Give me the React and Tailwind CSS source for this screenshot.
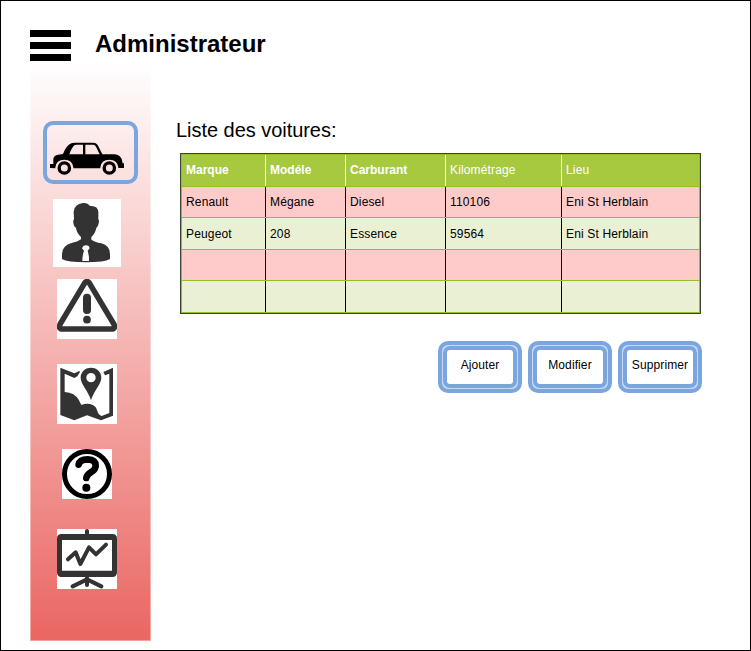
const headers = ["Marque", "Modéle", "Carburant", "Kilométrage", "Lieu"];

const rows = [
  { height: "h-[31px]", color: "bg-[#ffcaca]", cells: ["Renault", "Mégane", "Diesel", "110106", "Eni St Herblain"] },
  { height: "h-[32px]", color: "bg-[#e9f0d3]", cells: ["Peugeot", "208", "Essence", "59564", "Eni St Herblain"] },
  { height: "h-[31px]", color: "bg-[#ffcaca]", cells: ["", "", "", "", ""] },
  { height: "h-[32px]", color: "bg-[#e9f0d3]", cells: ["", "", "", "", ""] },
];

const columns = "grid grid-cols-[84px_80px_100px_116px_137px]";

function CarIcon() {
  return (
    <svg width="75" height="34" viewBox="60 96 225 102">
      <path d="M60 162H70V146Q72 136 84 134L99 132Q109 106 124 100Q127 98 134 98H190Q198 98 203 105L217 133H254Q270 135 275 147L278 160H282V174H262L220 175H78L60 174Z" />
      <path d="M118 133Q125 113 133 106Q135 104 139 104H159V133ZM166 104H190Q195 104 198 110L209 133H166Z" fill="#fce5e4" />
      <path d="M76 172q2-22 27-23q25 1 27 23v24H76zM211 172q2-22 27-23q25 1 27 23v24h-54z" fill="#fbe0df" />
      <circle cx="103" cy="174" r="15.500" fill="#fbe0df" stroke="#000" strokeWidth="10" />
      <circle cx="238" cy="174" r="15.500" fill="#fbe0df" stroke="#000" strokeWidth="10" />
    </svg>
  );
}

function PersonIcon() {
  return (
    <svg width="68" height="68" viewBox="69 27 204 204" fill="#333" className="bg-white">
      <path d="M131 65q2-23 28-26q14-1 21 9q24-2 25 18v22q3 2 1 12q-2 11-7 14q-4 18-15 27v8q9 7 30 11q26 7 26 32v15q-16 10-72 10t-72-10v-15q0-23 26-32q22-5 31-12v-7q-12-10-15-27q-7-4-8-15q-1-9 2-11z" />
      <path d="M160 168q8-5 16 0l3 7-6 7q5 17 4 31h-20q0-17 5-31l-6-7z" fill="#fff" />
    </svg>
  );
}

function WarningIcon() {
  return (
    <svg width="60" height="60" viewBox="81 27 180 180" fill="#333" className="bg-white">
      <path d="M164 39q7-9 14 0l74 124q6 14-8 14H98q-14 0-8-14z" fill="none" stroke="#333" strokeWidth="16.500" />
      <path d="M159 83a12 12 0 0 1 24 0v37a12 12 0 0 1-24 0z" />
      <circle cx="171" cy="149" r="11.500" />
    </svg>
  );
}

function MapIcon() {
  return (
    <svg width="60" height="60" viewBox="81 27 180 180" fill="#333" className="bg-white">
      <path d="M91 38L133 55L148 48L150 51L142 64L133 69L104 56V111Q134 112 147 136Q151 147 155 150Q164 145 180 147Q199 151 202 168Q205 180 215 183L238 174V56L225 61L220 51L249 38V182L213 196L171 181L133 196L91 180Z" />
      <path fillRule="evenodd" d="M183 38c19 0 31 14 31 30c0 19-21 37-31 67c-10-30-31-48-31-67c0-16 12-30 31-30zm0 16a14 14 0 1 0 0 28a14 14 0 1 0 0-28z" />
    </svg>
  );
}

function HelpIcon() {
  return (
    <svg width="50" height="50" viewBox="96 27 150 150" className="bg-white">
      <circle cx="171" cy="102" r="67.500" fill="none" stroke="#000" strokeWidth="15" />
      <path d="M146 74q3-16 27-16q24 1 24 19q0 11-13 19q-13 7-15 18" fill="none" stroke="#000" strokeWidth="20" strokeLinecap="round" />
      <circle cx="169" cy="143" r="12" />
    </svg>
  );
}

function BoardIcon() {
  return (
    <svg width="60" height="60" viewBox="81 27 180 180" fill="none" stroke="#333" strokeLinecap="round" className="bg-white">
      <path d="M171 33v12M171 174v21" strokeWidth="12" />
      <path fillRule="evenodd" stroke="none" fill="#333" d="M95 42h152q14 0 14 14v101q0 14-14 14H95q-14 0-14-14V56q0-14 14-14zm1 18v92h150V60z" />
      <path d="M171 178l-43 21M171 178l43 21" strokeWidth="12" />
      <path d="M114 118l23-21 14 35 26-50 21 21 30-29" strokeWidth="12" strokeLinejoin="round" />
    </svg>
  );
}

function ActionButton({ children }) {
  return (
    <button className="h-[52px] w-[84px] rounded-[10px] border-4 border-[#7ba5df] bg-[#c8daf4] p-px">
      <span className="flex h-full items-center justify-center rounded-[7px] border-4 border-[#7ba5df] bg-white pb-1 text-[12px] tracking-[0.1px] whitespace-nowrap">
        <span>{children}</span>
      </span>
    </button>
  );
}

export default function App() {
  return (
    <div className="h-[651px] w-[751px] overflow-hidden border border-black bg-white pl-[29px] pt-[29px] font-['Liberation_Sans',Arial,sans-serif] text-black">
      <header className="flex h-[31px] items-center gap-6">
        <div className="flex h-[31px] w-[41px] flex-col justify-between">
          <div className="h-[7px] bg-black" />
          <div className="h-[7px] bg-black" />
          <div className="h-[7px] bg-black" />
        </div>
        <h1 className="pb-1 text-[24px] leading-7 font-bold">Administrateur</h1>
      </header>
      <div className="flex">
        <nav className="flex h-[580px] w-[121px] flex-col items-center border-x border-b border-white/40 bg-linear-to-b/srgb from-white to-[#ea6662] bg-origin-border">
          <div className="mt-[60px] flex h-[63px] w-[95px] justify-center rounded-[10px] border-4 border-[#7ba5df] pt-[17px] pr-1.5">
            <CarIcon />
          </div>
          <div className="mt-[15px] pr-[7px]"><PersonIcon /></div>
          <div className="mt-3 pr-[7px]"><WarningIcon /></div>
          <div className="mt-[25px] pr-[7px]"><MapIcon /></div>
          <div className="mt-[25px] pr-[7px]"><HelpIcon /></div>
          <div className="mt-[30px] pr-[7px]"><BoardIcon /></div>
        </nav>
        <main className="pt-[57px] pl-[25px]">
          <h2 className="text-[20px] leading-6 tracking-[-0.04px]">Liste des voitures:</h2>
          <div className="mt-[11px] ml-1 w-[521px] border border-[#3b4430] text-[12px] tracking-[0.15px]">
            <div className="border-x border-t border-[#93be24]">
              <div className={`${columns} h-[32px] border-b border-[#93be24] bg-[#a6c93f] text-white`}>
                {headers.map((label, i) => (
                  <div key={label} className={`flex items-center pb-0.5 pl-1 ${i < 4 ? "border-r border-white" : ""} ${i < 3 ? "font-bold tracking-normal" : ""}`}>
                    {label}
                  </div>
                ))}
              </div>
              {rows.map((row, r) => (
                <div key={r} className={`${columns} ${row.height} ${row.color} border-b border-[#93be24]`}>
                  {row.cells.map((cell, i) => (
                    <div key={i} className={`flex items-center pl-1 ${i < 4 ? "border-r border-black" : ""}`}>
                      {cell}
                    </div>
                  ))}
                </div>
              ))}
            </div>
          </div>
          <div className="mt-[27px] ml-[262px] flex gap-1.5">
            <ActionButton>Ajouter</ActionButton>
            <ActionButton>Modifier</ActionButton>
            <ActionButton>Supprimer</ActionButton>
          </div>
        </main>
      </div>
    </div>
  );
}
